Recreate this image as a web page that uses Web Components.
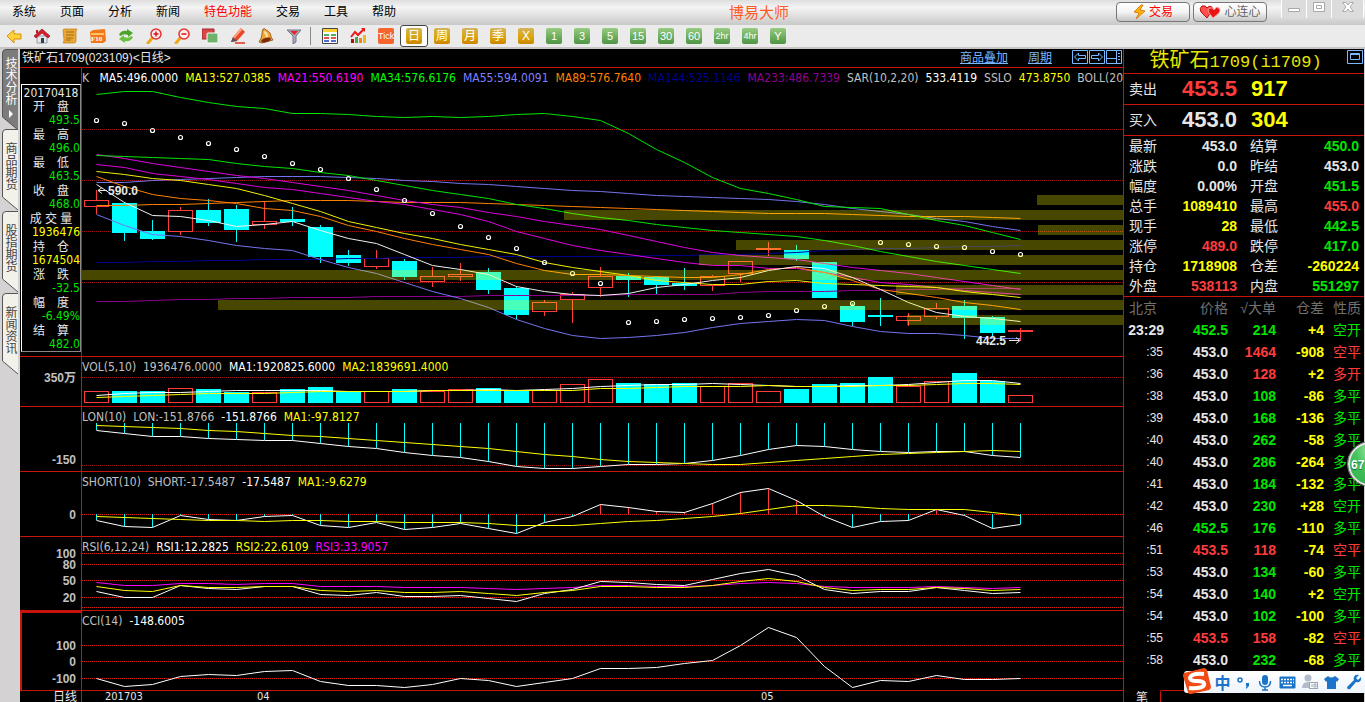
<!DOCTYPE html>
<html lang="zh-CN">
<head>
<meta charset="utf-8">
<title>博易大师</title>
<style>
  html, body { height: 100%; }
  body {
    margin: 0;
    overflow: hidden;
    background: #000;
    color: #e6e6e6;
    font: 12px/14px "Liberation Sans", "Noto Sans CJK SC", sans-serif;
    --line: #c8140c;
    --red: #ff3c3c;
    --green: #00e600;
    --yellow: #ffff00;
    --num: "DejaVu Sans Condensed", "Noto Sans", "Noto Sans CJK SC", sans-serif;
  }
</style>
</head>
<body>
<trade-app></trade-app>

<script>
// 创建 shadow root 并写入模板
function mount(el, html) {
  el.attachShadow({ mode: 'open' }).innerHTML = html;
  return el.shadowRoot;
}

/* ---------- 顶部菜单 ---------- */
class MenuBar extends HTMLElement {
  connectedCallback() {
    const items = ['系统', '页面', '分析', '新闻', '特色功能', '交易', '工具', '帮助'];
    mount(this, `
      <style>
        :host {
          display: flex;
          height: 25px;
          color: #000;
          background: linear-gradient(#dedede, #f4f4f4 30%, #e2e2e2 60%, #c8c8c8);
        }
        nav { display: flex; gap: 24px; padding-left: 12px; align-items: center; }
        a { color: inherit; text-decoration: none; line-height: 27px; }
        a.hot { color: #f00; }
        h1 { flex: 1; margin: 0; padding-left: 6px; text-align: center; font-size: 15px; font-weight: normal; line-height: 26px; color: #ff5a1e; }
        .acts { display: flex; gap: 3px; padding: 2px 14px 3px 0; }
        .acts button {
          display: flex; align-items: center; justify-content: center; gap: 3px;
          width: 74px; height: 20px; padding: 0;
          border: 1px solid #777; border-radius: 4px;
          background: linear-gradient(#fff, #f4f4f4 50%, #c4c4c4);
          font: inherit; font-size: 12px; color: #666;
        }
        .acts button:first-child { color: #f00; }
        .win { display: flex; height: 18px; padding-right: 1px; }
        .win button { width: 25px; padding: 0 0 4px; border: 0; border-left: 1px solid #fff; background: #dcdcdc; line-height: 0; }
        .win button:last-child { width: 33px; border-right: 1px solid #fff; }
        .win svg { fill: #fff; stroke: #a8a8a8; }
      </style>
      <nav>${items.map(t => `<a href="#"${t === '特色功能' ? ' class="hot"' : ''}>${t}</a>`).join('')}</nav>
      <h1>博易大师</h1>
      <div class="acts">
        <button>
          <svg width="13" height="16" viewBox="0 0 13 16"><path d="M8 1L1 8l5 1-3 6 9-8-5-1 3-5z" fill="#ffb400" stroke="#d06a00" stroke-width=".8"/></svg>交易
        </button>
        <button>
          <svg width="22" height="16" viewBox="0 0 22 16"><path d="M8 14L2 8Q0 4 3 2q4-1 5 2 2-3 5-1 1 2-1 5z" fill="#ff5050" stroke="#b80a0a"/><path d="M14 14L10 9Q8 5 11 4q3-1 4 2 2-4 5-2 2 2 0 5z" fill="#e81414" stroke="#ff9c9c"/></svg>心连心
        </button>
      </div>
      <div class="win">
        <button aria-label="最小化"><svg width="14" height="14"><path d="M1.500 8.500h11v3h-11z"/></svg></button>
        <button aria-label="最大化"><svg width="14" height="14"><path d="M1.500 2.500h11v9h-11zM4.500 5.500h5v3h-5z"/></svg></button>
        <button aria-label="关闭"><svg width="14" height="14"><path d="M1.500 2.500h3.500l2 2.500 2-2.500h3.500l-3.500 4.500 3.500 4.500h-3.500l-2-2.500-2 2.500h-3.500l3.500-4.500z"/></svg></button>
      </div>`);
  }
}
customElements.define('menu-bar', MenuBar);

/* ---------- 工具栏 ---------- */
const ICONS = {
  后退: '<path d="M1 8l7-6v4h7v5H8v4z" fill="#ffd23c" stroke="#d89000"/>',
  首页: '<path d="M3 8v7h10V8z" fill="#e4e8ee" stroke="#99a"/><path d="M8 1L0 8l2 2 6-5 6 5 2-2z" fill="#d81e2c" stroke="#8c0c14" stroke-width=".6"/><path d="M7 10h3v5H7z" fill="#344"/><path d="M2 2h2v3H2z" fill="#a22"/>',
  笔记: '<path d="M1 2q0-1 2-1h12q-1 1-1 3v9q0 2-2 2H1q1-1 1-3z" fill="#e8a838" stroke="#c07c10" stroke-width=".7"/><path d="M4 4h8M4 7h8M4 10h7M4 12h5" stroke="#a86a08"/>',
  资料: '<path d="M0 4l3-2 12-1 1 12-3 2H1z" fill="#f07818"/><path d="M1 5h13v2H1z" fill="#ffc060"/><text x="1" y="13" font-size="7" font-weight="bold" fill="#fff" font-family="Liberation Serif">F10</text>',
  刷新: '<path d="M1 7q2-5 8-4V1l6 4-5 4V7Q5 5 3 8z" fill="#4aa428"/><path d="M15 9q-2 5-8 4v2l-6-4 5-4v2q5 2 7-1z" fill="#6cc040"/>',
  放大: '<path d="M7 9l-5 6" stroke="#f0a818" stroke-width="3" stroke-linecap="round"/><circle cx="10" cy="6" r="5" fill="#ffecec" stroke="#e83030" stroke-width="1.500"/><path d="M7.500 6h5M10 3.500v5" stroke="#d81414" stroke-width="1.500"/>',
  缩小: '<path d="M7 9l-5 6" stroke="#f0a818" stroke-width="3" stroke-linecap="round"/><circle cx="10" cy="6" r="5" fill="#ffecec" stroke="#e83030" stroke-width="1.500"/><path d="M7.500 6h5" stroke="#d81414" stroke-width="1.500"/>',
  叠加: '<path d="M0 1h12v10H0z" fill="#d84848" stroke="#a02828"/><rect x="5" y="5" width="11" height="10" rx="1" fill="#6cb46c" stroke="#fff"/>',
  画线: '<path d="M1 14l2-5 8-9 4 4-8 9z" fill="#e84828"/><path d="M1 14l2-5 4 4z" fill="#555"/><path d="M3 9l8-9 1.500 1.500-8 9z" fill="#ffa080"/><path d="M5 15h10" stroke="#e03020" stroke-width="1.500"/>',
  预警: '<path d="M5 1q2-1 3 1 5 2 5 7l2 3-11 3-3-1q3-4 3-8 0-3 1-5z" fill="#f0a838" stroke="#8c4a08" stroke-width=".8"/><path d="M6 4q3 1 3 5" stroke="#ffe09c" fill="none" stroke-width="2"/><ellipse cx="8" cy="12" rx="5" ry="2" fill="#7a2c08" transform="rotate(-18 8 12)"/>',
  筛选: '<path d="M1 2h14l-5 6v6l-3 2V8z" fill="#aab" stroke="#778"/><path d="M4 3h8L8.500 7z" fill="#e02828"/>',
  报价: '<path d="M.5.500h15v15H.5z" fill="#fff" stroke="#444"/><path d="M1 1h14v3H1z" fill="#ffd030"/><path d="M2 7h5M9 7h5" stroke="#139c28" stroke-width="1.500"/><path d="M2 10h5M9 10h5" stroke="#e01a1a" stroke-width="1.500"/><path d="M2 13h5M9 13h5" stroke="#1a40c8" stroke-width="1.500"/>',
  走势: '<path d="M1 11h3v4H1z" fill="#b01010"/><path d="M5 9h3v6H5z" fill="#48a848"/><path d="M9 10h3v5H9z" fill="#e88a1a"/><path d="M13 7h3v8h-3z" fill="#f0b820"/><path d="M1 9l4-5 3 3 6-6" fill="none" stroke="#e81818" stroke-width="2"/><path d="M11 0h4v4z" fill="#e81818"/>',
};

class ToolBar extends HTMLElement {
  connectedCallback() {
    const icon = name => `<button aria-label="${name}"><svg width="16" height="16" viewBox="0 0 16 16">${ICONS[name]}</svg></button>`;
    const chip = (t, cls) => `<button class="${cls}"><span>${t}</span></button>`;
    const names = Object.keys(ICONS);
    mount(this, `
      <style>
        :host { display: flex; height: 22px; background: #ebebeb; border-bottom: 2px solid #c8c4c4; }
        button {
          display: flex; align-items: center; justify-content: center;
          width: 28px; height: 22px; padding: 0; border: 0; background: none; font: inherit;
        }
        i { width: 1px; height: 18px; margin: 2px 5px 0 2px; background: #888; }
        span {
          width: 16px; height: 16px; border-radius: 2px; overflow: hidden;
          color: #fff; font-size: 12px; line-height: 16px; text-align: center; white-space: nowrap;
        }
        .tick span { background: #f4642c; font-size: 9px; }
        .gold span { background: linear-gradient(#d2b45c, #dca408 60%, #c88400); }
        .leaf span { background: linear-gradient(#98cc80, #4c9444); font-size: 11px; }
        .small span { font-size: 9px; }
        .on { border: 1px solid #444; border-radius: 3px; background: #fff; }
      </style>
      ${names.slice(0, 11).map(icon).join('')}<i></i>${names.slice(11).map(icon).join('')}
      ${chip('Tick', 'tick')}
      ${['日', '周', '月', '季', 'X'].map(t => chip(t, t === '日' ? 'gold on' : 'gold')).join('')}
      ${['1', '3', '5', '15', '30', '60'].map(t => chip(t, 'leaf')).join('')}
      ${chip('2hr', 'leaf small')}${chip('4hr', 'leaf small')}${chip('Y', 'leaf')}`);
  }
}
customElements.define('tool-bar', ToolBar);

/* ---------- 左侧页签 ---------- */
class SideTabs extends HTMLElement {
  connectedCallback() {
    const tabs = ['技术分析', '商品期货', '股指期货', '新闻资讯'];
    mount(this, `
      <style>
        :host { display: flex; flex-direction: column; background: #d4d2d2; }
        button {
          display: grid; width: 20px; height: 82px; padding: 0; border: 0; background: none;
          color: #444; font: inherit; line-height: 14px;
        }
        button > * { grid-area: 1 / 1; }
        span { writing-mode: vertical-rl; justify-self: start; margin-left: 3px; padding-top: 13px; text-align: left; }
        .on { color: #fff; height: 80px; }
        .on span { padding-top: 8px; }
        .mark { fill: #fff; }
      </style>
      ${tabs.map((t, i) => `
        <button class="${i ? '' : 'on'}">
          <svg width="20" height="82"><path d="M18 .5H6q-3.500 0-3.500 3.500v64L18 81" fill="${i ? '#f2f1ea' : '#7c7c7c'}" stroke="#555"/>${i ? '' : '<path class="mark" d="M9 61l4 4-4 4z"/>'}</svg>
          <span>${t}</span>
        </button>`).join('')}`);
  }
}
customElements.define('side-tabs', SideTabs);

/* ---------- 图表数据（纵坐标为各窗格内的像素位置） ---------- */
const STEP = 28;
const FIRST = 14;
const px = i => FIRST + i * STEP + .5;

// 涨跌, 最高, 实体上沿, 实体下沿, 最低
const CANDLES = [
  ['u',122,132,139,146],['d',134,135,165,173],['d',152,163,171,172],['u',139,142,164,167],['d',131,142,155,158],
  ['d',137,141,162,174],['u',133,153,157,161],['d',139,151,154,158],['d',157,159,189,195],['d',182,187,195,198],
  ['u',182,190,199,201],['d',191,193,209,212],['u',199,208,214,219],['u',195,206,209,213],['d',200,204,222,226],
  ['d',218,220,247,251],['u',232,234,244,248],['u',224,226,232,255],['u',199,208,220,229],['d',205,208,212,229],
  ['d',208,209,217,226],['d',200,215,218,222],['u',207,208,218,223],['u',193,193,206,214],['u',174,180,182,188],
  ['d',177,182,191,193],['d',194,194,230,230],['d',235,238,254,258],['d',230,247,249,258],['u',245,248,253,258],
  ['u',235,240,249,251],['d',232,238,250,271],['d',248,249,265,269],['u',260,262,264,273],
];

const PANES = {
  k: {
    title: [['K&nbsp;', 'silver'], ['MA5:496.0000', '#fff'], ['MA13:527.0385', '#ff0'], ['MA21:550.6190', '#f0f'], ['MA34:576.6176', '#0f0'],
      ['MA55:594.0091', '#8080ff'], ['MA89:576.7640', '#ff8000'], ['MA144:525.1146', '#000090'], ['MA233:486.7339', '#900090'],
      ['SAR(10,2,20)', 'silver'], ['533.4119', '#fff'], ['SSLO', 'silver'], ['473.8750', '#ff0'], ['BOLL(20', 'silver']],
    grid: [61, 112, 163, 214], dim: true,
    lines: [
      ['#000090', [194,194,193,193,192,192,191,191,191,190,190,189,189,189,188,188,188,188,188,188,187,187,186,186,185,184,182,181,180,180,179,178,178,177]],
      ['#900090', [233,233,232,231,231,230,230,229,229,229,228,228,228,228,227,227,227,227,227,226,226,226,226,224,223,223,223,222,222,221,221,220,220,220]],
      ['#7474f0', [114,114,112,111,110,109,108,108,108,109,110,112,113,115,116,118,120,122,123,125,127,128,129,130,131,133,136,140,143,146,150,153,158,162]],
      ['#7474f0', [146,157,166,168,172,177,180,182,191,199,205,214,223,230,239,251,260,267,270,269,267,264,259,255,253,251,252,258,263,265,265,267,270,270]],
      ['#ff8000', [137,137,136,136,135,134,133,132,132,132,133,134,134,134,135,136,137,138,139,140,141,142,143,144,145,145,145,146,147,148,148,148,149,150]],
      ['#e000e0', [86,90,95,99,103,107,110,114,118,122,127,132,136,139,144,148,153,157,161,167,173,179,184,187,189,191,195,199,202,205,209,213,217,221]],
      ['#e000e0', [96,99,105,108,111,115,119,121,125,129,133,136,141,146,153,163,170,177,182,186,190,194,197,197,200,200,204,209,214,216,219,222,224,226]],
      ['#00e600', [26,23,23,29,34,38,40,45,45,46,48,49,48,49,48,46,45,48,52,65,81,94,109,120,125,131,138,139,140,146,152,157,164,171]],
      ['#00e600', [87,88,89,90,91,95,98,100,104,107,112,117,122,126,130,136,140,145,149,152,156,159,162,164,166,168,172,177,183,188,193,197,201,205]],
      ['#f0f000', [103,106,110,112,116,120,127,135,143,153,159,165,170,176,181,186,194,199,203,207,212,214,216,216,213,212,215,216,217,218,219,223,226,229]],
      ['#ff8000', [108,118,126,130,132,135,140,142,148,157,163,170,176,181,186,195,202,206,206,207,208,209,209,206,201,199,204,212,221,225,229,234,237,241]],
      ['#f0f0f0', [116,134,147,148,152,158,156,153,162,170,175,186,197,201,206,218,223,226,227,225,219,216,212,209,202,198,200,209,221,234,244,248,250,253]],
    ],
    sar: [52,55,62,69,75,81,88,95,101,110,121,132,145,158,169,180,194,205,215,254,253,251,250,249,247,242,238,235,174,176,178,179,183,186],
    bands: [[0,202],[136,232],[482,142],[654,172],[617,187],[955,127],[956,157],[814,217],[825,247]],
    notes: [[26, 127, '590.0', 'M16 122.500h9M20 119.500l-4 3 4 3'], [894, 277, '442.5', 'M927 272.500h10M934 269.500l4 3-4 3']],
  },
  vol: {
    title: [['VOL(5,10)&nbsp; 1936476.0000', 'silver'], ['MA1:1920825.6000', '#fff'], ['MA2:1839691.4000', '#ff0']],
    grid: [20], dim: true, axis: [[25, '350万']],
    vols: [34,34,34,31,32,35,35,32,30,35,34,32,34,32,31,33,33,27,22,26,27,26,29,26,34,32,27,26,20,29,24,16,24,38],
    lines: [
      ['#fff', [38,36,35,35,34,33,33,33,33,34,34,34,33,33,32,33,32,31,29,28,27,27,26,27,28,29,29,28,28,27,25,23,23,26]],
      ['#ff0', [40,39,38,37,36,36,36,35,34,34,34,34,33,33,33,33,33,33,31,31,30,29,29,29,28,29,29,29,28,28,27,26,26,27]],
    ],
  },
  lon: {
    title: [['LON(10)&nbsp; LON:-151.8766', 'silver'], ['-151.8766', '#fff'], ['MA1:-97.8127', '#ff0']],
    grid: [58], dim: true, axis: [[57, '-150']], stems: 16,
    lines: [
      ['#fff', [23,26,29,29,31,32,33,33,36,39,41,45,48,50,54,59,61,61,59,57,57,56,53,48,42,38,39,42,44,45,44,44,48,50]],
      ['#ff0', [18,19,20,21,23,24,26,28,29,31,33,35,37,39,41,44,47,49,52,54,55,56,57,57,55,53,51,49,47,46,45,44,43,44]],
    ],
  },
  short: {
    title: [['SHORT(10)&nbsp; SHORT:-17.5487', 'silver'], ['-17.5487', '#fff'], ['MA1:-9.6279', '#ff0']],
    grid: [42], axis: [[47, '0']], stems: 42,
    lines: [
      ['#fff', [48,54,55,43,47,48,44,43,53,55,50,57,55,51,56,61,50,44,32,35,39,40,31,20,16,28,44,55,49,48,37,43,56,52]],
      ['#ff0', [44,45,46,47,48,48,49,48,48,49,49,50,50,50,51,53,53,53,51,49,48,46,44,41,37,33,33,34,36,37,37,37,40,43]],
    ],
  },
  rsi: {
    title: [['RSI(6,12,24)', 'silver'], ['RSI1:12.2825', '#fff'], ['RSI2:22.6109', '#ff0'], ['RSI3:33.9057', '#f0f']],
    grid: [16, 27, 43, 60, 70], axis: [[21, '100'], [32, '80'], [48, '50'], [65, '20']],
    lines: [
      ['#f0f', [45,48,48,46,46,47,46,46,49,49,49,50,50,50,51,52,51,50,48,48,49,49,48,46,45,46,49,50,50,50,49,50,51,50]],
      ['#fff', [54,60,60,48,51,52,49,49,57,58,55,59,59,58,61,64,56,52,44,45,47,48,42,36,32,38,52,56,54,54,50,53,56,55]],
      ['#ff0', [49,53,54,48,50,50,49,49,53,54,53,55,55,54,56,58,55,53,49,49,50,50,48,44,41,44,50,53,52,52,50,51,53,52]],
    ],
  },
  cci: {
    title: [['CCI(14)', 'silver'], ['-148.6005', '#fff']],
    grid: [34, 50, 67], axis: [[39, '100'], [55, '0'], [72, '-100']],
    lines: [['#fff', [67,75,73,65,63,64,60,59,70,74,74,76,73,67,69,75,71,67,57,57,56,52,49,34,16,26,55,76,69,70,64,68,68,67]]],
  },
};

/* ---------- 图表窗格 ---------- */
class ChartPane extends HTMLElement {
  connectedCallback() {
    const p = PANES[this.getAttribute('kind')];
    mount(this, `
      <style>
        :host { display: grid; grid-template-columns: 62px 1fr; min-height: 0; border-bottom: 1px solid var(--line); overflow: hidden; }
        :host([selected]) .axis { box-shadow: inset 1px 1px 0 1px var(--line); }
        .axis { border-right: 1px solid var(--line); min-height: 0; }
        .plot { display: grid; min-width: 0; min-height: 0; }
        .plot > * { grid-area: 1 / 1; min-width: 0; }
        svg { display: block; width: 100%; height: 100%; overflow: hidden; }
        .title { display: flex; gap: 7px; overflow: hidden; white-space: nowrap; font: 12px/20px var(--num); }
        text { font: bold 12px "Liberation Sans", "Noto Sans CJK SC", sans-serif; fill: silver; }
        .note text { fill: #e6e6e6; }
        .note path { stroke: #e6e6e6; fill: none; }
        .grid line { stroke: #e01c14; stroke-dasharray: 1 1; }
        .grid.dim line { stroke: #a01010; }
        polyline { fill: none; }
        .up { fill: #000; stroke: var(--red); }
        .down { fill: #0ff; stroke: #0ff; }
        .wick { stroke: none; }
        .up.wick { fill: var(--red); }
        .candle, .grid { shape-rendering: crispEdges; }
        .sar circle { fill: none; stroke: #fff; stroke-width: 1.2; }
        .bands { fill: rgba(255, 255, 0, .28); }
      </style>
      <div class="axis">
        <slot>${p.axis ? `<svg>${p.axis.map(([y, t]) => `<text x="56" y="${y}" text-anchor="end">${t}</text>`).join('')}</svg>` : ''}</slot>
      </div>
      <div class="plot">
        <svg>${this.draw(p)}</svg>
        <div class="title">${p.title.map(([t, c]) => `<span style="color:${c}">${t}</span>`).join('')}</div>
      </div>`);
  }

  // 1px 竖线
  stick(i, y1, y2, cls) {
    return `<rect class="${cls} wick" x="${px(i) - .5}" y="${Math.min(y1, y2)}" width="1" height="${Math.abs(y2 - y1)}"/>`;
  }

  draw(p) {
    let out = `<g class="grid${p.dim ? ' dim' : ''}">` + p.grid.map(y => `<line x1="0" x2="100%" y1="${y}.5" y2="${y}.5"/>`).join('') + '</g>';
    const cls = k => k === 'u' ? 'up' : 'down';

    if (p.sar) {
      out += '<g class="candle">' + CANDLES.map(([k, h, t, b, l], i) => {
        const c = cls(k);
        return this.stick(i, h, t, c) + this.stick(i, b, l, c) +
          `<rect class="${c}" x="${px(i) - 12}" y="${t + .5}" width="24" height="${Math.max(1, b - t - 1)}"/>`;
      }).join('') + '</g>';
    }
    if (p.vols) {
      out += '<g class="candle">' + p.vols.map((y, i) =>
        `<rect class="${cls(CANDLES[i][0])}" x="${px(i) - 12}" y="${y + .5}" width="24" height="${45 - y}"/>`).join('') + '</g>';
    }
    // 零轴到指标线的竖线
    if (p.stems) {
      out += p.lines[0][1].map((y, i) => this.stick(i, p.stems, y, y < p.stems ? 'up' : 'down')).join('');
    }
    out += p.lines.map(([c, ys]) => `<polyline stroke="${c}" points="${ys.map((y, i) => `${px(i)},${y + .5}`).join(' ')}"/>`).join('');
    if (p.sar) {
      out += '<g class="sar">' + p.sar.map((y, i) => `<circle cx="${px(i)}" cy="${y + .5}" r="2"/>`).join('') + '</g>';
      out += '<g class="bands">' + p.bands.map(([x, y]) => `<rect x="${x}" y="${y}" width="100%" height="10"/>`).join('') + '</g>';
      out += '<g class="note">' + p.notes.map(([x, y, t, d]) => `<text x="${x}" y="${y}">${t}</text><path d="${d}"/>`).join('') + '</g>';
    }
    return out;
  }
}
customElements.define('chart-pane', ChartPane);

/* ---------- 十字光标数据框 ---------- */
class DayInfo extends HTMLElement {
  connectedCallback() {
    const rows = [['开　盘', '493.5'], ['最　高', '496.0'], ['最　低', '463.5'], ['收　盘', '468.0'], ['成 交 量', '1936476', 1],
      ['持　仓', '1674504', 1], ['涨　跌', '-32.5'], ['幅　度', '-6.49%'], ['结　算', '482.0']];
    mount(this, `
      <style>
        :host { display: block; margin: 16px 0 0 1px; border: 1px solid #fff; border-right-color: #888; border-bottom-color: #888; }
        dl, dt, dd, time { display: block; margin: 0; line-height: 14px; }
        time, dd { font-family: var(--num); text-align: right; }
        time { text-align: center; line-height: 16px; height: 14px; }
        dt { text-align: center; line-height: 16px; height: 14px; }
        dd { color: var(--green); }
        .y { color: var(--yellow); }
      </style>
      <time>20170418</time>
      <dl>${rows.map(([k, v, y]) => `<dt>${k}</dt><dd${y ? ' class="y"' : ''}>${v}</dd>`).join('')}</dl>`);
  }
}
customElements.define('day-info', DayInfo);

/* ---------- 图表区 ---------- */
class ChartBoard extends HTMLElement {
  connectedCallback() {
    mount(this, `
      <style>
        :host { display: grid; grid-template-rows: 19px minmax(288px, 1fr) 50px 65px 65px 74px 80px 11px; min-width: 0; min-height: 0; background: #000; overflow: hidden; }
        header { display: flex; align-items: center; border-bottom: 1px solid var(--line); padding-left: 2px; }
        h2 { flex: 1; margin: 0; font-size: 12px; font-weight: normal; line-height: 18px; }
        a { color: #7ab8ff; margin-right: 20px; line-height: 18px; }
        .tools { display: flex; gap: 1px; padding: 0 1px 2px 0; }
        .tools button { padding: 0; border: 0; background: none; line-height: 0; }
        .tools svg { fill: none; stroke: #7ab8ff; }
        footer { display: grid; grid-template-columns: 62px 1fr; line-height: 12px; }
        footer > span { text-align: right; padding-right: 4px; border-right: 1px solid var(--line); }
        .dates { display: grid; grid-template-columns: 152px 504px 1fr; padding-left: 23px; font-family: var(--num); font-size: 11px; }
      </style>
      <header>
        <h2>铁矿石1709(023109)&lt;日线&gt;</h2>
        <a href="#">商品叠加</a><a href="#">周期</a>
        <div class="tools">
          <button aria-label="左移"><svg width="16" height="14"><path d="M.5.500h15v13H.5zM2.500 7l4-4v2.500h7v3h-7V11z"/></svg></button>
          <button aria-label="右移"><svg width="16" height="14"><path d="M.5.500h15v13H.5zM13.500 7l-4-4v2.500h-7v3h7V11z"/></svg></button>
          <button aria-label="布局"><svg width="16" height="14"><path d="M.5.500h15v13H.5zM10.500 0v14M0 8.500h10M12 3.500h2M12 6.500h2M12 9.500h2"/></svg></button>
        </div>
      </header>
      <chart-pane kind="k"><day-info></day-info></chart-pane>
      <chart-pane kind="vol"></chart-pane>
      <chart-pane kind="lon"></chart-pane>
      <chart-pane kind="short"></chart-pane>
      <chart-pane kind="rsi"></chart-pane>
      <chart-pane kind="cci" selected></chart-pane>
      <footer><span>日线</span><div class="dates"><span>201703</span><span>04</span><span>05</span></div></footer>`);
  }
}
customElements.define('chart-board', ChartBoard);

/* ---------- 右侧报价 ---------- */
class QuotePanel extends HTMLElement {
  connectedCallback() {
    const quote = [
      ['最新', '453.0', 'w', '结算', '450.0', 'g'], ['涨跌', '0.0', 'w', '昨结', '453.0', 'w'],
      ['幅度', '0.00%', 'w', '开盘', '451.5', 'g'], ['总手', '1089410', 'y', '最高', '455.0', 'r'],
      ['现手', '28', 'y', '最低', '442.5', 'g'], ['涨停', '489.0', 'r', '跌停', '417.0', 'g'],
      ['持仓', '1718908', 'y', '仓差', '-260224', 'y'], ['外盘', '538113', 'r', '内盘', '551297', 'g'],
    ];
    const deals = [
      ['23:29', '452.5', 'g', '214', 'g', '+4', '空开'], [':35', '453.0', 'w', '1464', 'r', '-908', '空平'],
      [':36', '453.0', 'w', '128', 'r', '+2', '多开'], [':38', '453.0', 'w', '108', 'g', '-86', '多平'],
      [':39', '453.0', 'w', '168', 'g', '-136', '多平'], [':40', '453.0', 'w', '262', 'g', '-58', '多平'],
      [':40', '453.0', 'w', '286', 'g', '-264', '多平'], [':41', '453.0', 'w', '184', 'g', '-132', '多平'],
      [':42', '453.0', 'w', '230', 'g', '+28', '空开'], [':46', '452.5', 'g', '176', 'g', '-110', '多平'],
      [':51', '453.5', 'r', '118', 'r', '-74', '空平'], [':53', '453.0', 'w', '134', 'g', '-60', '多平'],
      [':54', '453.0', 'w', '140', 'g', '+2', '空开'], [':54', '453.0', 'w', '102', 'g', '-100', '多平'],
      [':55', '453.5', 'r', '158', 'r', '-82', '空平'], [':58', '453.0', 'w', '232', 'g', '-68', '多平'],
    ];
    mount(this, `
      <style>
        :host { display: flex; flex-direction: column; min-height: 0; overflow: hidden; background: #000; border-left: 1px solid var(--line); font-size: 14px; }
        header { display: flex; align-items: center; height: 24px; border-bottom: 1px solid var(--line); color: #e6e600; }
        h2 { flex: 1; margin: 0; text-align: center; font-size: 20px; line-height: 24px; font-weight: normal; white-space: nowrap; }
        h2 span { font-family: "Liberation Mono", monospace; font-size: 17px; }
        header button { align-self: start; margin: 1px 1px 0 0; padding: 0; border: 0; background: none; line-height: 0; }
        .side { display: grid; grid-template-columns: 53px 69px 1fr; align-items: center; height: 30px; padding-left: 5px; border-bottom: 1px solid var(--line); }
        .side b { font-size: 22px; line-height: 30px; }
        table { width: 100%; border-collapse: collapse; table-layout: fixed; }
        th { font-weight: normal; text-align: left; padding: 0; }
        td { font-weight: bold; text-align: right; padding: 0; }
        .quote tr { height: 20px; line-height: 20px; }
        .quote { border-bottom: 1px solid var(--line); }
        .quote th:first-child { padding-left: 5px; }
        .quote th + td + th { padding-left: 13px; }
        .quote td:last-child { padding-right: 5px; }
        .deals tr { height: 22px; line-height: 22px; }
        .deals thead th { color: #707070; text-align: right; white-space: nowrap; }
        .deals thead th:first-child { text-align: left; padding-left: 5px; }
        .deals thead th:last-child, .deals td:last-child { text-align: left; padding-left: 9px; font-weight: normal; }
        .deals td:first-child { padding-right: 1px; font: 12px/22px "Liberation Sans", sans-serif; }
        .deals tr:first-child td:first-child { font-weight: bold; font-size: 14px; padding-right: 0; }
        .w { color: #e6e6e6; } .r { color: var(--red); } .g { color: var(--green); } .y { color: var(--yellow); }
        footer { display: grid; grid-template-columns: 36px 1fr; height: 12px; margin-top: auto; overflow: hidden; }
        footer button { padding: 0; border: 0; background: none; color: inherit; font: 12px/14px "Noto Sans CJK SC", sans-serif; height: 14px; }
        footer i { border: 1px solid var(--line); border-width: 1px 0 0 1px; border-radius: 2px 0 0 0; }
      </style>
      <header>
        <h2>铁矿石<span>1709(i1709)</span></h2>
        <button aria-label="窗口"><svg width="16" height="14" fill="none" stroke="#7ab8ff"><path d="M.5.500h15v13H.5zM3.500 3.500h9v6h-9zM3 4.500h10"/></svg></button>
      </header>
      <div class="side"><span>卖出</span><b class="r">453.5</b><b class="y">917</b></div>
      <div class="side"><span>买入</span><b class="w">453.0</b><b class="y">304</b></div>
      <table class="quote">
        <colgroup><col style="width:38px"><col style="width:75px"><col style="width:47px"><col></colgroup>
        ${quote.map(([a, b, c, d, e, f]) => `<tr><th>${a}</th><td class="${c}">${b}</td><th>${d}</th><td class="${f}">${e}</td></tr>`).join('')}
      </table>
      <table class="deals">
        <colgroup><col style="width:40px"><col style="width:64px"><col style="width:48px"><col style="width:48px"><col></colgroup>
        <thead><tr><th>北京</th><th>价格</th><th>√大单</th><th>仓差</th><th>性质</th></tr></thead>
        <tbody>${deals.map(([t, p, pc, v, vc, d, k]) => `<tr><td>${t}</td><td class="${pc}">${p}</td><td class="${vc}">${v}</td><td class="y">${d}</td><td class="${vc}">${k}</td></tr>`).join('')}</tbody>
      </table>
      <footer><button>笔</button><i></i></footer>`);
  }
}
customElements.define('quote-panel', QuotePanel);

/* ---------- 输入法悬浮条 ---------- */
class ImeBar extends HTMLElement {
  connectedCallback() {
    mount(this, `
      <style>
        :host { position: absolute; right: 0; bottom: 9px; display: flex; align-items: center; height: 22px; padding-left: 29px; gap: 2px; background: linear-gradient(#fff, #eef4fb); color: #1c74c8; border-radius: 3px 0 0 3px; }
        .logo { position: absolute; left: -2px; top: -4px; }
        button { padding: 0; border: 0; width: 19px; background: none; color: inherit; font: bold 16px/22px "Noto Sans CJK SC", sans-serif; }
        button svg { display: block; margin: auto; fill: #1c74c8; }
      </style>
      <svg class="logo" width="30" height="28" viewBox="0 0 30 28"><path d="M2 6l20-5q2 0 3 2l4 17q0 2-2 3L9 27q-3 0-3-2L1 9q0-2 1-3z" fill="#f04c14"/><path d="M22 7Q9 6 8 11q0 3 7 3 8 0 7 4-2 4-15 3" fill="none" stroke="#fff" stroke-width="4"/></svg>
      <button>中</button>
      <button aria-label="标点"><svg width="16" height="16"><circle cx="4" cy="6" r="2" fill="none" stroke="#1c74c8" stroke-width="1.500"/><path d="M10 9h3v3l-3 3v-2l1-1h-1z"/></svg></button>
      <button aria-label="语音"><svg width="14" height="17"><rect x="4" y="1" width="6" height="10" rx="3"/><path d="M1.500 7q0 6 5.500 6t5.500-6M7 13v3M4 16h6" fill="none" stroke="#1c74c8" stroke-width="1.500"/></svg></button>
      <button style="width:23px" aria-label="键盘"><svg width="17" height="13"><rect x=".5" y=".5" width="16" height="12" rx="1"/><path d="M2 3.500h13M2 6.500h13" stroke="#fff" stroke-width="1.500" stroke-dasharray="2 1"/><path d="M4 9.500h9" stroke="#fff" stroke-width="1.500"/></svg></button>
      <button aria-label="账号"><svg width="17" height="16"><circle cx="6" cy="4" r="3.500" fill="#b4bccc"/><path d="M0 14q0-6 6-6t6 6z" fill="#b4bccc"/><rect x="7.500" y="8.500" width="8" height="6" fill="#fff" stroke="#98a4b8"/><path d="M10 10v3M12 10h2v3h-2z" stroke="#98a4b8" fill="none"/></svg></button>
      <button aria-label="皮肤"><svg width="15" height="14"><path d="M4 1q3 3 7 0l4 3-2 3-1-1v8H3V6L2 7 0 4z"/></svg></button>
      <button style="width:22px" aria-label="工具"><svg width="16" height="16"><path d="M15 3l-3 3-2-2 3-3Q9 0 8 3q-1 2 0 3l-7 7q0 3 3 2l6-7q6 1 5-5z"/></svg></button>`);
  }
}
customElements.define('ime-bar', ImeBar);

/* ---------- 加速球，半边露在窗口外 ---------- */
class SpeedBall extends HTMLElement {
  connectedCallback() {
    mount(this, `
      <style>
        :host {
          position: absolute; right: -27px; top: 442px; width: 40px; height: 40px;
          border: 2px solid #e4e4e4; border-radius: 50%; outline: 1px solid #777;
          background: radial-gradient(circle at 60% 15%, #b8f0b4, #44c45c 45%, #2fae4c);
          color: #fff; font: bold 12px/42px "Liberation Sans", sans-serif; text-indent: 1px; text-shadow: 0 1px 1px #064;
          overflow: hidden;
        }
      </style>67`);
  }
}
customElements.define('speed-ball', SpeedBall);

/* ---------- 主框架 ---------- */
class TradeApp extends HTMLElement {
  connectedCallback() {
    mount(this, `
      <style>
        :host { position: relative; display: grid; grid-template-rows: 25px 24px minmax(0, 1fr); height: 100vh; overflow: hidden; background: #d4d2d2; }
        main { display: grid; grid-template-columns: 20px minmax(0, 1fr) 241px; padding-right: 1px; min-height: 0; }
      </style>
      <menu-bar></menu-bar>
      <tool-bar></tool-bar>
      <main>
        <side-tabs></side-tabs>
        <chart-board></chart-board>
        <quote-panel></quote-panel>
      </main>
      <speed-ball></speed-ball>
      <ime-bar></ime-bar>`);
  }
}
customElements.define('trade-app', TradeApp);
</script>
</body>
</html>
